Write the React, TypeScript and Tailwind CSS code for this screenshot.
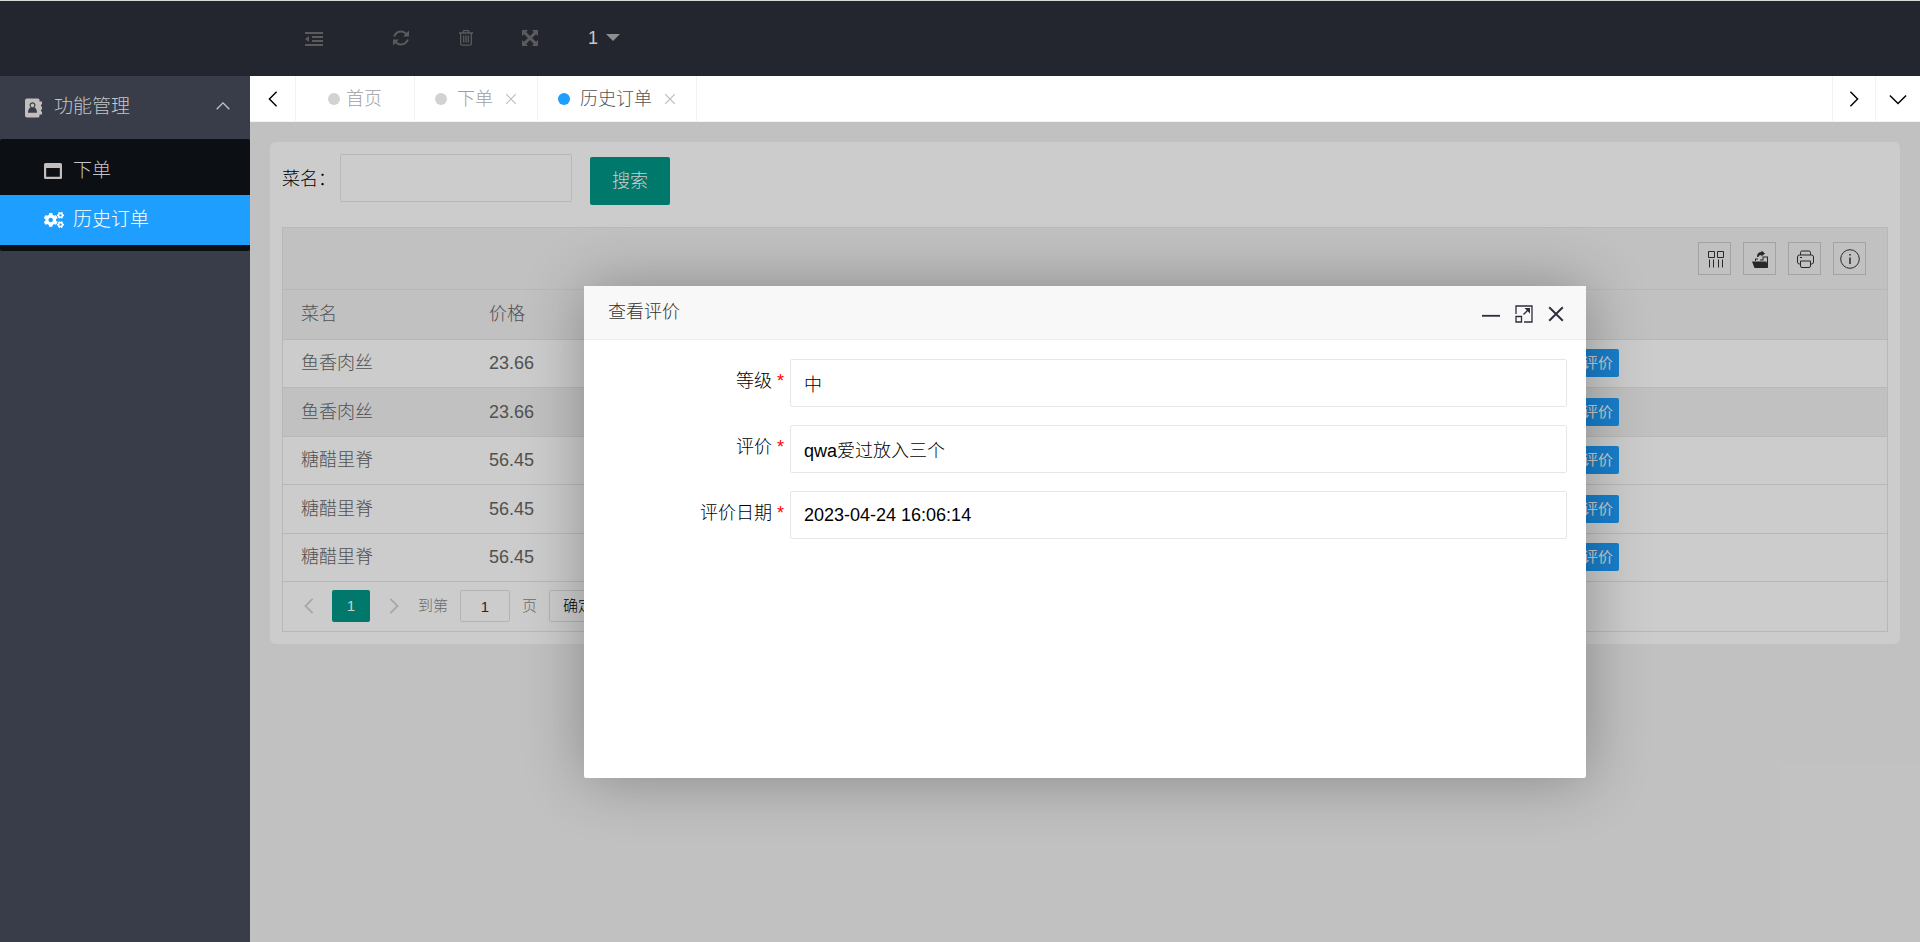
import { ReactNode } from "react";
import { FaCogs } from "react-icons/fa";

const dishes = [
  { name: "鱼香肉丝", price: "23.66" },
  { name: "鱼香肉丝", price: "23.66", hovered: true },
  { name: "糖醋里脊", price: "56.45" },
  { name: "糖醋里脊", price: "56.45" },
  { name: "糖醋里脊", price: "56.45" },
];

const fields = [
  { id: "level", label: "等级", value: "中" },
  { id: "comment", label: "评价", value: "qwa爱过放入三个" },
  { id: "date", label: "评价日期", value: "2023-04-24 16:06:14" },
];

function Line({ d, size, width = 1.5 }: { d: string; size: number; width?: number }) {
  return (
    <svg width={size} height={size} viewBox="0 0 20 20" fill="none" stroke="currentColor" strokeWidth={width}>
      <path d={d} />
    </svg>
  );
}

function Header() {
  return (
    <header className="flex h-[76px] shrink-0 items-center border-t border-[#d5dbd9] bg-[#23262e] pb-[2px] pl-[305px] text-[#5b5b5b]">
      <button aria-label="收起" className="mr-[70px] pt-[2px]">
        <svg width="18" height="14" viewBox="0 0 18 14" fill="currentColor">
          <path d="M0 0h18v2H0zM7 4h11v2H7zM7 8h11v2H7zM0 12h18v2H0zM4 4v6L0 7z" />
        </svg>
      </button>
      <button aria-label="刷新" className="mr-[50px]">
        <svg width="16" height="16" viewBox="0 0 16 16" fill="none" stroke="currentColor" strokeWidth="2.200">
          <path d="M1.200 6.500Q3 1.500 8 1.500q3 0 5.500 2.500M14.800 9.500Q13 14.500 8 14.500q-3 0-5.500-2.500" />
          <path d="M16 .5v6h-6zM0 15.500v-6h6z" fill="currentColor" stroke="none" />
        </svg>
      </button>
      <button aria-label="清理" className="mr-[49px]">
        <svg width="14" height="16" viewBox="0 0 14 16" fill="none" stroke="currentColor" strokeWidth="1.300">
          <path d="M0 3h14M4.200 3V1.500Q4.200.7 5 .7h4q.8 0 .8.8V3M1.700 3v10.700q0 1.500 1.500 1.500h7.600q1.500 0 1.500-1.500V3M4.700 5.500v7M7 5.500v7M9.300 5.500v7" />
        </svg>
      </button>
      <button aria-label="全屏" className="mr-[50px]">
        <svg width="16" height="16" viewBox="0 0 16 16" fill="currentColor">
          <path d="M0 0h6L4.200 1.900 8 6l3.800-4.100L10 0h6v6l-1.900-1.800L10 8l4.100 3.800L16 10v6h-6l1.800-1.900L8 10l-3.800 4.100L6 16H0v-6l1.900 1.800L6 8 1.900 4.200 0 6z" />
        </svg>
      </button>
      <button className="flex items-center gap-2 text-lg text-[#c8c8c9]">
        1 <svg width="14" height="7" viewBox="0 0 14 7" fill="#8d8e92"><path d="M0 0h14L7 7z" /></svg>
      </button>
    </header>
  );
}

function Sidebar() {
  return (
    <nav className="w-[250px] shrink-0 bg-[#393d49] text-[19px] text-[#c4c5c8]">
      <button className="flex h-[63px] w-full items-center pl-6 pr-[18px]">
        <svg width="18" height="20" viewBox="0 0 18 20" className="mr-3 text-[#c2bebe]">
          <path fill="currentColor" fillRule="evenodd" d="M3 .5h11q1.500 0 1.500 1.500v1.500H18v3h-1v2h1v3h-1v2h1v3h-2.500V18q0 1.500-1.500 1.500H3q-2 0-2-2v-15q0-2 2-2zM8.500 4.200a3 3 0 0 0-2 5.200Q4 10.500 4 14.800h9q0-4.300-2.500-5.400a3 3 0 0 0-2-5.200zM8.500 5.600a1.700 1.700 0 0 1 0 3.600a1.700 1.700 0 0 1 0-3.600z" />
        </svg>
        功能管理
        <span className="ml-auto pb-1"><Line d="M3 13.500l7-7 7 7" size={18} /></span>
      </button>
      <div className="rounded-xs bg-[#0c0f13] py-[6px]">
        <a href="#order" className="flex h-[50px] items-center gap-[11px] pl-11 pt-[2px]">
          <svg width="18" height="16" viewBox="0 0 18 16" fill="#c2bebe" fillRule="evenodd">
            <path d="M1.500 0h15Q18 0 18 1.500v13q0 1.500-1.500 1.500h-15Q0 16 0 14.500v-13Q0 0 1.500 0zM2.200 5v8.800h13.600V5z" />
          </svg>
          下单
        </a>
        <a href="#history" className="flex h-[50px] items-center gap-[9px] bg-[#1e9fff] pl-11 text-white">
          <FaCogs size={20} />
          历史订单
        </a>
      </div>
    </nav>
  );
}

function Tab({ label, active, closable }: { label: string; active?: boolean; closable?: boolean }) {
  return (
    <div className={`flex items-center border-r border-[#f2f2f2] text-lg ${closable ? "px-5" : "px-8"} ${active ? "text-[#555]" : "text-[#a0a0a0]"}`}>
      <span className={`size-3 rounded-full ${active ? "bg-[#1e9fff]" : "bg-[#d2d2d2]"}`} />
      <a href="#tab" className={closable ? "ml-[10px]" : "ml-[6px]"}>{label}</a>
      {closable && (
        <button aria-label={`关闭${label}`} className="ml-3 text-[#bdbdbd]">
          <Line d="M2 2l16 16M18 2L2 18" size={12} width={2} />
        </button>
      )}
    </div>
  );
}

function TabBar() {
  return (
    <div className="flex h-[46px] shrink-0 border-b border-[#f2f2f2] bg-white text-black">
      <button aria-label="向左" className="flex w-[46px] items-center justify-center border-r border-[#f2f2f2]">
        <Line d="M14 2l-8 8 8 8" size={18} width={1.6} />
      </button>
      <Tab label="首页" />
      <Tab label="下单" closable />
      <Tab label="历史订单" closable active />
      <button aria-label="向右" className="ml-auto flex w-[43px] items-center justify-center border-l border-[#f2f2f2]">
        <Line d="M6 2l8 8-8 8" size={18} width={1.6} />
      </button>
      <button aria-label="更多" className="flex w-[45px] items-center justify-center border-l border-[#f2f2f2]">
        <Line d="M1 6l9 9 9-9" size={18} width={1.6} />
      </button>
    </div>
  );
}

function Tool({ label, children }: { label: string; children: ReactNode }) {
  return (
    <button aria-label={label} className="flex size-[33px] items-center justify-center border border-[#ccc] text-[#333]">
      <svg width="20" height="20" viewBox="0 0 20 20" fill="none" stroke="currentColor">{children}</svg>
    </button>
  );
}

function OrderTable() {
  return (
    <div className="mt-[25px] border border-[#e6e6e6] text-[#666]">
      <div className="flex h-[62px] items-center justify-end gap-3 border-b border-[#e6e6e6] bg-[#f2f2f2] pr-[21px]">
        <Tool label="筛选列">
          <path d="M3.500 2.500h6v6h-6zM12.500 2.500h6v6h-6zM4.500 10.500v8M8.500 10.500v8M13.500 10.500v8M17.500 10.500v8" />
        </Tool>
        <Tool label="导出">
          <path fill="currentColor" stroke="none" d="M2 12.500h14.500l1.500 6.500H4.500zM5 9.500h3v1H6v1.500H5zM12.500 7.500H18V18h-1V8.500h-3.500v3H10v-1h2.500zM7 8q0-5 4.500-5V1.500L15 4.500l-3.500 3V6Q8.500 6 8.500 8z" />
        </Tool>
        <Tool label="打印">
          <path d="M5.500 6V3.500Q5.500 2 7 2h7q1.500 0 1.500 1.500V6M5.500 15h-1q-2 0-2-2V8q0-2 2-2h12q2 0 2 2v5q0 2-2 2h-1M5.500 12h10v5q0 1.500-1.500 1.500H7q-1.500 0-1.500-1.500zM5 8.500h2" />
        </Tool>
        <Tool label="提示">
          <circle cx="10" cy="10" r="9.300" />
          <path d="M10 8.500V15M10 5v1.500" strokeWidth="1.500" />
        </Tool>
      </div>
      <table className="w-full table-fixed border-collapse text-left text-lg">
        <thead>
          <tr className="h-[49px] border-b border-[#e6e6e6] bg-[#f2f2f2]">
            <th className="w-[188px] pl-[18px] font-light">菜名</th>
            <th className="pl-[18px] font-light">价格</th>
            <th className="w-[358px]" />
          </tr>
        </thead>
        <tbody>
          {dishes.map((dish, i) => (
            <tr key={i} className={`h-12 border-b border-[#e6e6e6] even:h-[49px] ${dish.hovered ? "bg-[#f2f2f2]" : ""}`}>
              <td className="pl-[18px]">{dish.name}</td>
              <td className="pl-[18px]">{dish.price}</td>
              <td className="pl-[18px]">
                <button className="block h-7 rounded-xs bg-[#1e9fff] px-[6px] text-[15px] font-normal text-white">查看评价</button>
              </td>
            </tr>
          ))}
        </tbody>
      </table>
      <div className="flex h-[49px] items-center pl-[17px] text-[15px] text-[#888]">
        <button aria-label="上一页" className="text-[#d2d2d2]"><Line d="M14 2l-8 8 8 8" size={18} width={2} /></button>
        <span className="ml-[14px] flex h-8 w-[38px] items-center justify-center rounded-xs bg-[#009688] text-white">1</span>
        <button aria-label="下一页" className="ml-[15px] text-[#d2d2d2]"><Line d="M6 2l8 8-8 8" size={18} width={2} /></button>
        <label htmlFor="page" className="ml-[15px]">到第</label>
        <input id="page" defaultValue="1" className="mx-3 h-8 w-[50px] rounded-xs border border-[#e2e2e2] text-center text-[#333]" />
        页
        <button className="ml-3 h-8 w-[58px] rounded-xs border border-[#e2e2e2] text-black">确定</button>
      </div>
    </div>
  );
}

function ReviewDialog() {
  return (
    <div role="dialog" aria-label="查看评价" className="h-3/5 w-3/5 rounded-xs bg-white shadow-[1px_1px_62px_rgba(0,0,0,0.3)]">
      <div className="flex h-[54px] items-center border-b border-[#eee] bg-[#f8f8f8] pb-[2px] pl-6 pr-[22px] text-lg text-[#333]">
        查看评价
        <div className="ml-auto flex items-center gap-[15px] pt-1 text-[#2e2d3c]">
          <button aria-label="最小化"><Line d="M0 12h20" size={18} width={2} /></button>
          <button aria-label="最大化">
            <svg width="18" height="18" viewBox="0 0 18 18" fill="none" stroke="currentColor" strokeWidth="1.300">
              <path d="M1 9V1h16v16H9M1 11.500h5.500V17H1zM8.500 9.500l6-6" />
              <path d="M9.500 3h5.500v5.500z" fill="currentColor" stroke="none" />
            </svg>
          </button>
          <button aria-label="关闭"><Line d="M1.500 1.500l17 17M18.500 1.500l-17 17" size={16} width={2.4} /></button>
        </div>
      </div>
      <form className="flex flex-col gap-[18px] pr-[19px] pt-[19px]">
        {fields.map((field) => (
          <div key={field.id} className="flex text-lg text-black">
            <label htmlFor={field.id} className="w-[206px] shrink-0 pr-[6px] pt-2 text-right">
              {field.label} <span className="text-[#f00]">*</span>
            </label>
            <input id={field.id} defaultValue={field.value} className="h-12 flex-1 rounded-xs border border-[#e6e6e6] px-[13px]" />
          </div>
        ))}
      </form>
    </div>
  );
}

export default function App() {
  return (
    <div className="flex h-screen flex-col overflow-hidden font-['Liberation_Sans','Noto_Sans_CJK_SC',sans-serif] font-light">
      <Header />
      <div className="flex min-h-0 flex-1">
        <Sidebar />
        <div className="flex min-w-0 flex-1 flex-col">
          <TabBar />
          <main className="relative flex-1 overflow-hidden bg-[#f2f2f2] p-5">
            <div className="rounded-md bg-white p-3">
              <form className="flex items-center">
                <label htmlFor="dish" className="w-[58px] pt-[2px] text-lg">菜名：</label>
                <input id="dish" className="h-12 w-[232px] rounded-xs border border-[#e6e6e6] px-3" />
                <button type="button" className="relative top-[3px] ml-[18px] h-12 w-20 rounded-xs bg-[#009688] text-lg text-white">搜索</button>
              </form>
              <OrderTable />
            </div>
            <div className="absolute inset-0 flex items-center justify-center bg-black/20">
              <ReviewDialog />
            </div>
          </main>
        </div>
      </div>
    </div>
  );
}
